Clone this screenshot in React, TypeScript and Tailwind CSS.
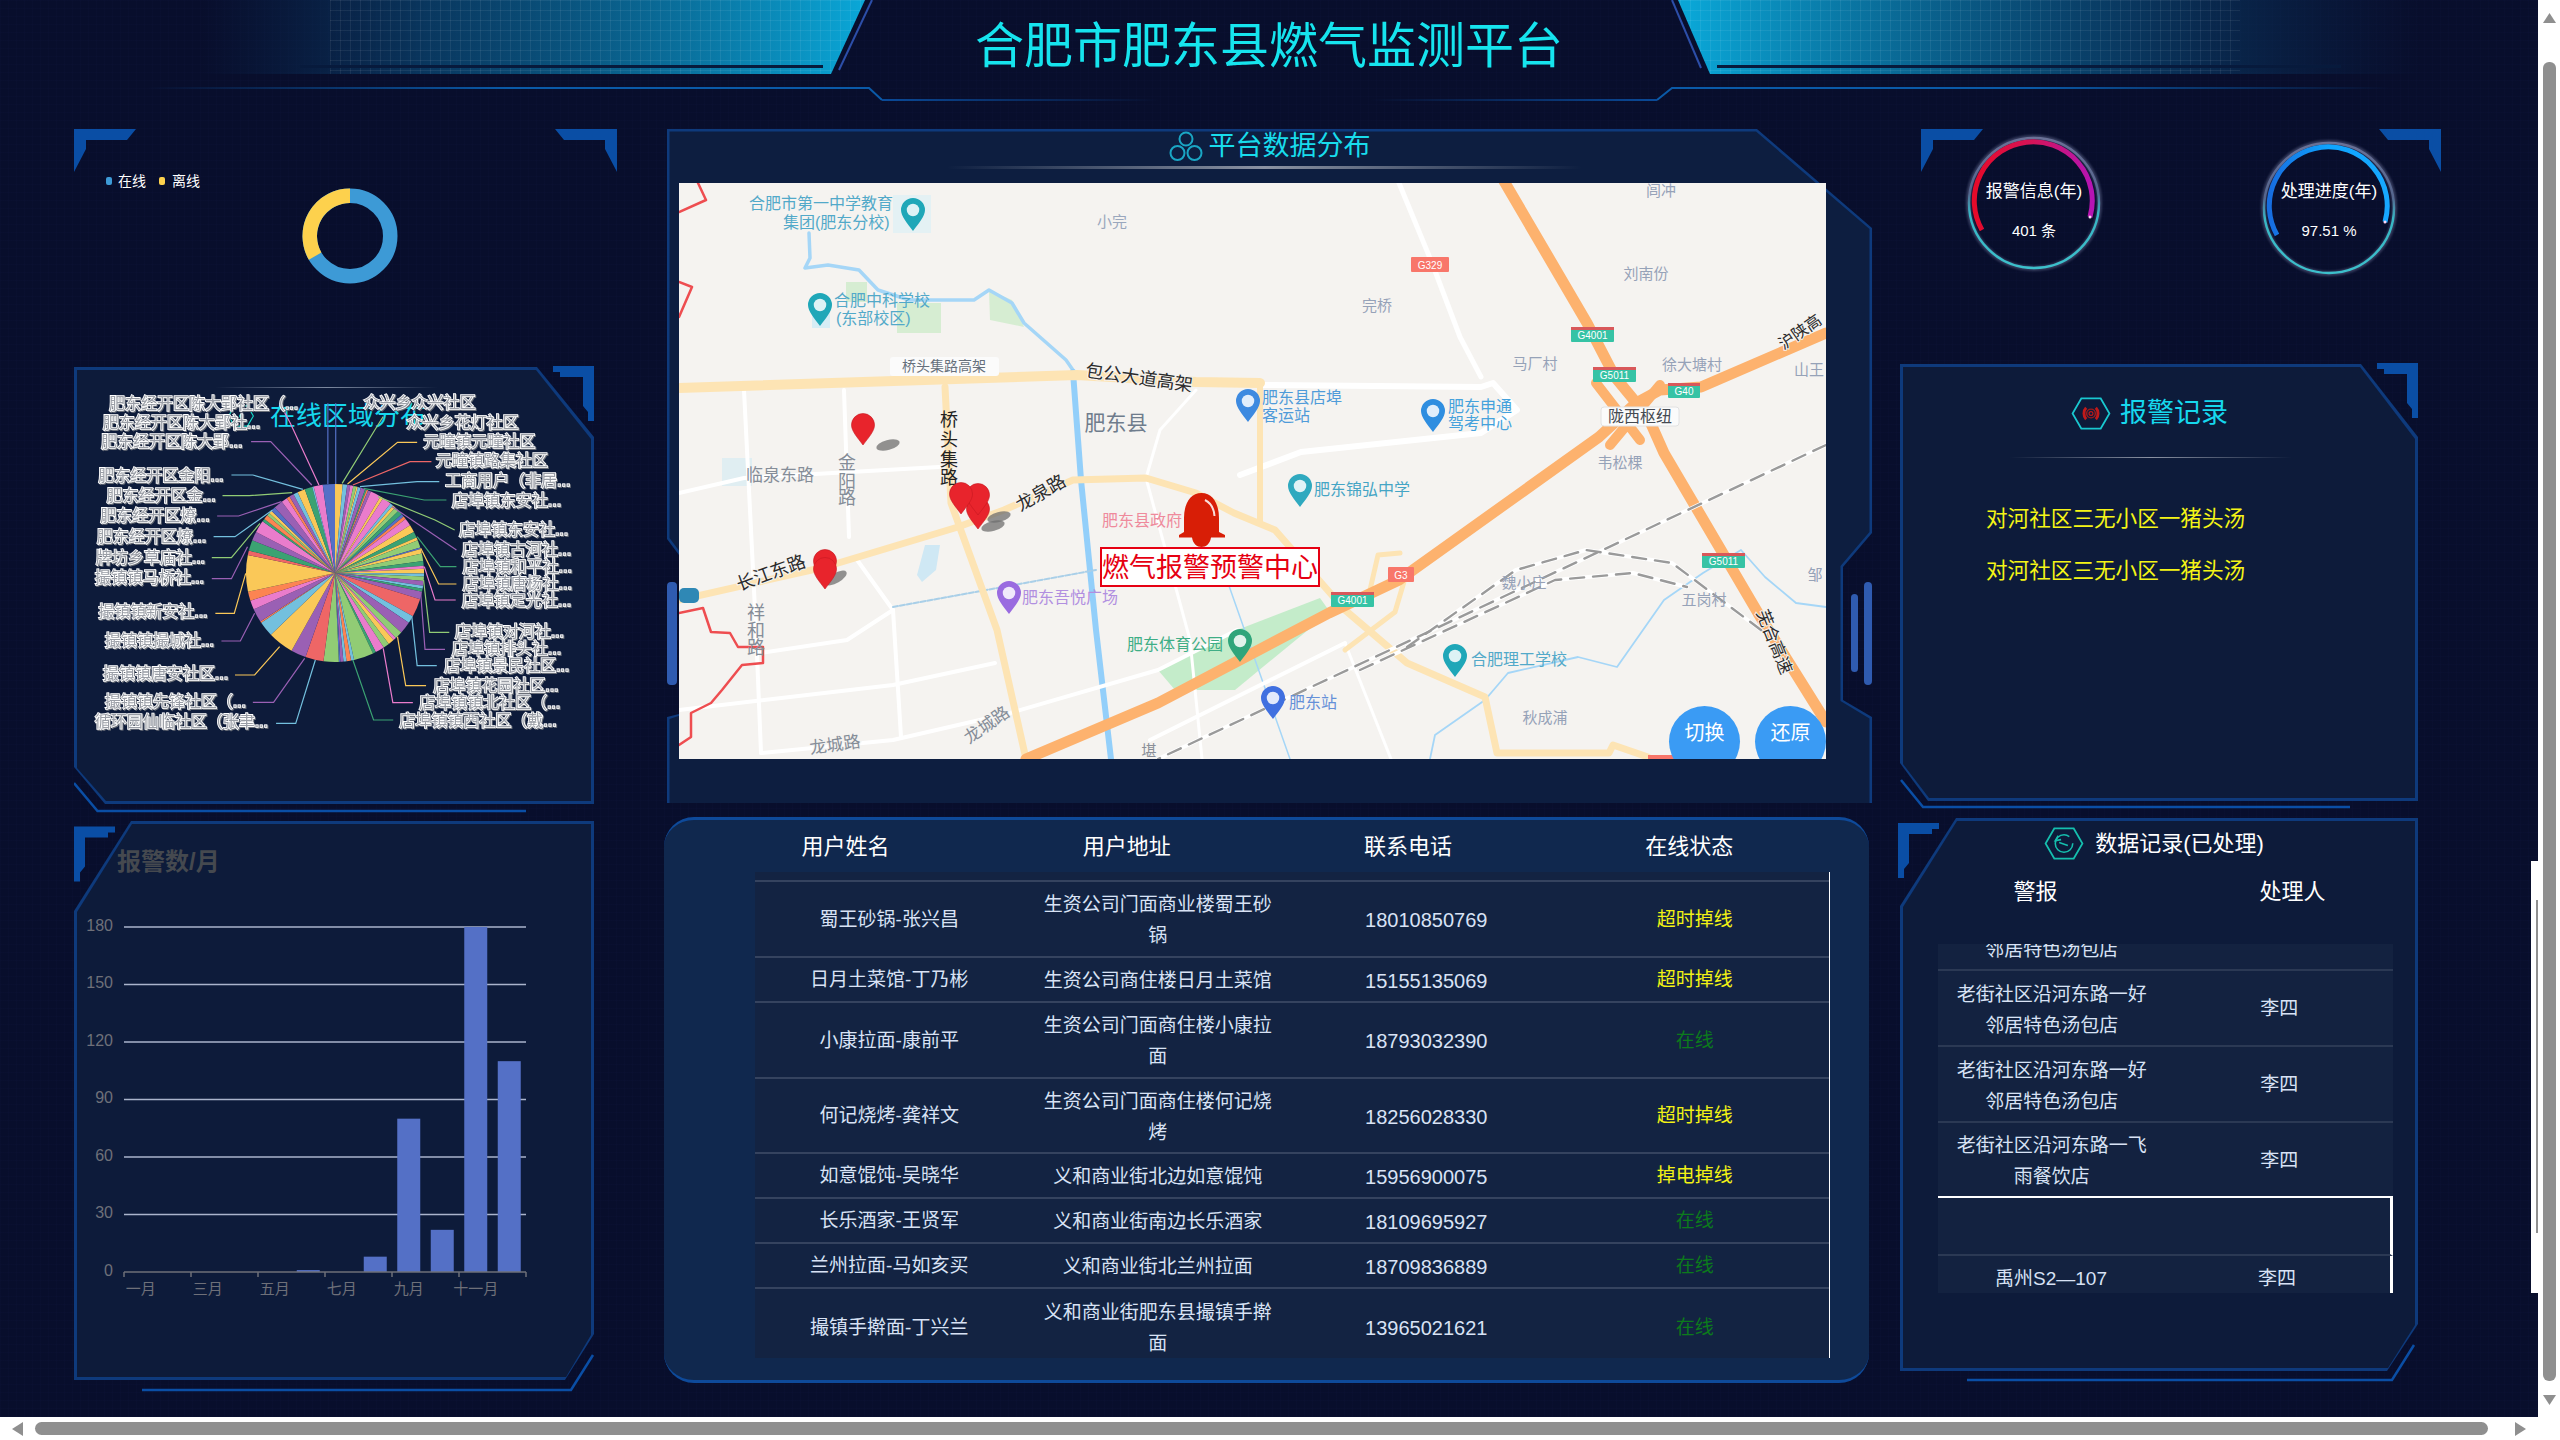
const PIE_COLORS: Record<string, string> = {
  b: '#5470c6', g: '#91cc75', y: '#fac858', r: '#ee6666', c: '#73c0de',
  d: '#3ba272', o: '#fc8452', p: '#9a60b4', k: '#ea7ccc',
}

const SLICES =
  'y5 c3 p2 k2 g2 y1 c2 p3 d1 o1 p2 k7 y2 k6 c2 y2 g3 d3 b2 o2 k5 y5 d4 y2 g5 b1 y3 g5 d3 k2 y3 c2 g3 p3 c2 d2 p5 r12 c5 p8 g5 k2 y4 g4 k6 d2 g13 c2 o3 c2 p2 b1 g10 r12 p10 y17 c10 o1 p9 k6 o6 y24 r3 d7 p6 k8 d2 o3 g2 y2 b3 p6 k4 o2 p3 c3 y5 d5 c1 k6 b8'
    .split(' ')
    .map((s) => ({ color: PIE_COLORS[s[0]], deg: Number(s.slice(1)) }))

// coordinates below were read off the pie crop, zx / zy turn them into page pixels
const zx = (v: number) => 60 + v / 2.8
const zy = (v: number) => 360 + v / 3

type PieLabel = { text: string; x: number; y: number; color: string; line: number[] }

const PIE_LABELS: PieLabel[] = [
  { text: '肥东经开区陈大郢社区（...', x: 137, y: 130, color: 'k', line: [725, 375, 645, 190, 625, 150] },
  { text: '肥东经开区陈大郢社...', x: 120, y: 188, color: 'b', line: [750, 372, 750, 130] },
  { text: '肥东经开区陈大郢...', x: 115, y: 245, color: 'p', line: [705, 375, 590, 245, 535, 245] },
  { text: '肥东经开区金阳...', x: 107, y: 345, color: 'c', line: [680, 388, 540, 345, 480, 345] },
  { text: '肥东经开区金...', x: 130, y: 407, color: 'g', line: [650, 398, 530, 407, 455, 407] },
  { text: '肥东经开区燎...', x: 113, y: 466, color: 'p', line: [620, 425, 500, 468, 440, 468] },
  { text: '肥东经开区燎...', x: 103, y: 530, color: 'c', line: [595, 450, 490, 530, 430, 530] },
  { text: '牌坊乡草庙社...', x: 100, y: 592, color: 'g', line: [560, 490, 480, 593, 425, 593] },
  { text: '撮镇镇马桥社...', x: 97, y: 652, color: 'p', line: [525, 560, 480, 656, 425, 656] },
  { text: '撮镇镇新安社...', x: 107, y: 755, color: 'y', line: [520, 640, 488, 760, 435, 760] },
  { text: '撮镇镇撮城社...', x: 125, y: 840, color: 'p', line: [545, 760, 505, 843, 452, 843] },
  { text: '撮镇镇唐安社区...', x: 120, y: 940, color: 'y', line: [615, 860, 545, 945, 490, 945] },
  { text: '撮镇镇先锋社区（...', x: 125, y: 1025, color: 'p', line: [685, 895, 598, 1027, 540, 1027] },
  { text: '循环园仙临社区（张聿...', x: 97, y: 1085, color: 'c', line: [715, 900, 660, 1090, 605, 1090] },
  { text: '众兴乡众兴社区', x: 850, y: 128, color: 'g', line: [790, 370, 890, 195, 905, 170] },
  { text: '众兴乡花灯社区', x: 970, y: 187, color: 'b', line: [772, 372, 772, 130] },
  { text: '元疃镇元疃社区', x: 1017, y: 245, color: 'y', line: [805, 372, 945, 247, 1000, 247] },
  { text: '元疃镇路集社区', x: 1052, y: 300, color: 'r', line: [820, 375, 980, 305, 1040, 305] },
  { text: '工商用户（非居...', x: 1078, y: 360, color: 'c', line: [840, 380, 1000, 365, 1062, 365] },
  { text: '店埠镇东安社...', x: 1097, y: 420, color: 'd', line: [850, 385, 1020, 420, 1082, 420] },
  { text: '店埠镇东安社...', x: 1117, y: 507, color: 'g', line: [890, 410, 1050, 480, 1105, 510] },
  { text: '店埠镇古河社...', x: 1125, y: 567, color: 'p', line: [930, 440, 1110, 570] },
  { text: '店埠镇和平社...', x: 1127, y: 620, color: 'd', line: [1000, 530, 1065, 620, 1110, 620] },
  { text: '店埠镇唐杨社...', x: 1127, y: 670, color: 'y', line: [1010, 565, 1060, 672, 1110, 672] },
  { text: '店埠镇定光社...', x: 1125, y: 720, color: 'k', line: [1020, 620, 1050, 720, 1108, 720] },
  { text: '店埠镇对河社...', x: 1105, y: 815, color: 'g', line: [1018, 660, 1035, 817, 1090, 817] },
  { text: '店埠镇排头社...', x: 1097, y: 865, color: 'p', line: [1010, 700, 1022, 868, 1078, 868] },
  { text: '店埠镇景民社区...', x: 1075, y: 915, color: 'c', line: [985, 770, 1000, 917, 1055, 917] },
  { text: '店埠镇花园社区...', x: 1045, y: 975, color: 'y', line: [945, 830, 968, 977, 1025, 977] },
  { text: '店埠镇镇北社区（...', x: 1005, y: 1027, color: 'k', line: [905, 865, 932, 1028, 988, 1028] },
  { text: '店埠镇镇西社区（戴...', x: 950, y: 1080, color: 'd', line: [820, 900, 878, 1080, 933, 1080] },
]

const TABLE_ROWS = [
  { name: '蜀王砂锅-张兴昌', addr: '生资公司门面商业楼蜀王砂锅', phone: '18010850769', status: '超时掉线', tone: 'text-[#f2f215]', h: 'h-[76px]' },
  { name: '日月土菜馆-丁乃彬', addr: '生资公司商住楼日月土菜馆', phone: '15155135069', status: '超时掉线', tone: 'text-[#f2f215]', h: 'h-[45px]' },
  { name: '小康拉面-康前平', addr: '生资公司门面商住楼小康拉面', phone: '18793032390', status: '在线', tone: 'text-[#0c7a1c]', h: 'h-[76px]' },
  { name: '何记烧烤-龚祥文', addr: '生资公司门面商住楼何记烧烤', phone: '18256028330', status: '超时掉线', tone: 'text-[#f2f215]', h: 'h-[75px]' },
  { name: '如意馄饨-吴晓华', addr: '义和商业街北边如意馄饨', phone: '15956900075', status: '掉电掉线', tone: 'text-[#f2f215]', h: 'h-[45px]' },
  { name: '长乐酒家-王贤军', addr: '义和商业街南边长乐酒家', phone: '18109695927', status: '在线', tone: 'text-[#0c7a1c]', h: 'h-[45px]' },
  { name: '兰州拉面-马如亥买', addr: '义和商业街北兰州拉面', phone: '18709836889', status: '在线', tone: 'text-[#0c7a1c]', h: 'h-[45px]' },
  { name: '撮镇手擀面-丁兴兰', addr: '义和商业街肥东县撮镇手擀面', phone: '13965021621', status: '在线', tone: 'text-[#0c7a1c]', h: 'h-[76px]' },
]

const BARS = [
  { band: 5, value: 1 },
  { band: 7, value: 8 },
  { band: 8, value: 80 },
  { band: 9, value: 22 },
  { band: 10, value: 180 },
  { band: 11, value: 110 },
]

function TopBracket({ flip }: { flip?: boolean }) {
  return (
    <svg
      viewBox="0 0 62 43"
      className={flip ? 'absolute top-0 right-0 w-[62px] h-[43px] -scale-x-100' : 'absolute top-0 left-0 w-[62px] h-[43px]'}
    >
      <polygon points="0,0 62,0 53,11 12,11 12,20 0,43" fill="#0a4ea5" />
    </svg>
  )
}

function StepBracket({ className }: { className: string }) {
  return (
    <svg viewBox="0 0 41 55" className={className}>
      <polygon points="0,0 41,0 41,55 35,55 35,46 30,40 30,11 7,11 7,6 0,6" fill="#0a4ea5" />
    </svg>
  )
}

function Hex({ children, stroke, className }: { children: React.ReactNode; stroke: string; className: string }) {
  return (
    <svg viewBox="0 0 40 34" className={className}>
      <polygon points="10,1.5 30,1.5 39,17 30,32.5 10,32.5 1,17" fill="none" stroke={stroke} strokeWidth="1.8" />
      {children}
    </svg>
  )
}

function Gauge({ id, from, mid, to, title, value, textPad }: { id: string; from: string; mid: string; to: string; title: string; value: string; textPad: string }) {
  return (
    <div className="relative w-[140px] h-[140px] shrink-0">
      <svg viewBox="-70 -70 140 140" className="absolute inset-0 w-full h-full overflow-visible">
        <defs>
          <linearGradient id={`${id}-ring`} x1="0" y1="0" x2="0" y2="1">
            <stop offset="0" stopColor="#6a7196" />
            <stop offset="0.42" stopColor="#55668e" />
            <stop offset="0.58" stopColor="#38b6c4" />
            <stop offset="1" stopColor="#3cc0cc" />
          </linearGradient>
          <linearGradient id={`${id}-arc`} gradientUnits="userSpaceOnUse" x1="-59" y1="0" x2="59" y2="0">
            <stop offset="0" stopColor={from} />
            <stop offset="0.5" stopColor={mid} />
            <stop offset="1" stopColor={to} />
          </linearGradient>
        </defs>
        <circle r="65.5" fill="none" stroke="#5c6488" strokeOpacity="0.55" strokeWidth="5" className="blur-[1px]" />
        <circle r="65" fill="none" stroke={`url(#${id}-ring)`} strokeWidth="2.4" />
        <path d="M-52 27 A59 59 0 1 1 56 14" fill="none" stroke={`url(#${id}-arc)`} strokeWidth="5" />
        <circle cx="56" cy="14" r="1.5" fill="#ffd6f5" />
      </svg>
      <div className={`absolute inset-0 flex flex-col items-center text-white ${textPad}`}>
        <span className="h-[24px] leading-[24px] text-[17px] whitespace-nowrap">{title}</span>
        <span className="mt-[15px] h-[24px] leading-[24px] text-[15px] whitespace-nowrap">{value}</span>
      </div>
    </div>
  )
}

function Header() {
  return (
    <header className="relative h-[129px] flex justify-center">
      <svg viewBox="0 0 2538 129" className="absolute top-0 left-0 w-[2538px] h-[129px]">
        <defs>
          <linearGradient id="hl" gradientUnits="userSpaceOnUse" x1="200" y1="0" x2="860" y2="0">
            <stop offset="0" stopColor="#0a3a6a" stopOpacity="0" />
            <stop offset="0.35" stopColor="#0a5a8a" stopOpacity="0.55" />
            <stop offset="1" stopColor="#0aa6d6" />
          </linearGradient>
          <linearGradient id="hr" gradientUnits="userSpaceOnUse" x1="2420" y1="0" x2="1690" y2="0">
            <stop offset="0" stopColor="#0a3a6a" stopOpacity="0" />
            <stop offset="0.4" stopColor="#0a5a8a" stopOpacity="0.55" />
            <stop offset="1" stopColor="#0aa6d6" />
          </linearGradient>
          <linearGradient id="ll" gradientUnits="userSpaceOnUse" x1="147" y1="0" x2="869" y2="0">
            <stop offset="0" stopColor="#0a5aa8" stopOpacity="0" />
            <stop offset="0.5" stopColor="#0a5aa8" />
            <stop offset="1" stopColor="#0a5aa8" />
          </linearGradient>
          <linearGradient id="lr" gradientUnits="userSpaceOnUse" x1="2390" y1="0" x2="1672" y2="0">
            <stop offset="0" stopColor="#0a5aa8" stopOpacity="0" />
            <stop offset="0.5" stopColor="#0a5aa8" />
            <stop offset="1" stopColor="#0a5aa8" />
          </linearGradient>
          <linearGradient id="ll2" gradientUnits="userSpaceOnUse" x1="882" y1="0" x2="1159" y2="0">
            <stop offset="0" stopColor="#0a4a98" />
            <stop offset="1" stopColor="#0a4a98" stopOpacity="0" />
          </linearGradient>
          <linearGradient id="lr2" gradientUnits="userSpaceOnUse" x1="1657" y1="0" x2="1370" y2="0">
            <stop offset="0" stopColor="#0a4a98" />
            <stop offset="1" stopColor="#0a4a98" stopOpacity="0" />
          </linearGradient>
          <pattern id="grid" width="10" height="10" patternUnits="userSpaceOnUse">
            <path d="M10 0H0V10" fill="none" stroke="#ffffff" strokeOpacity="0.13" strokeWidth="1" />
          </pattern>
        </defs>
        <polygon points="200,0 865,0 831,74 200,74" fill="url(#hl)" />
        <polygon points="330,0 865,0 831,74 330,74" fill="url(#grid)" />
        <polygon points="1678,0 2420,0 2420,74 1710,74" fill="url(#hr)" />
        <polygon points="1678,0 2240,0 2240,74 1710,74" fill="url(#grid)" />
        <rect x="300" y="65" width="523" height="3" fill="#071a3c" />
        <rect x="1717" y="65" width="624" height="3" fill="#071a3c" />
        <line x1="872" y1="0" x2="839" y2="70" stroke="#2c4ea8" strokeWidth="2" />
        <line x1="1672" y1="0" x2="1701" y2="68" stroke="#2c4ea8" strokeWidth="2" />
        <path d="M147 88H869L882 100" fill="none" stroke="url(#ll)" strokeWidth="2" />
        <path d="M882 100H1159" fill="none" stroke="url(#ll2)" strokeWidth="2" />
        <path d="M2390 88H1672L1657 100" fill="none" stroke="url(#lr)" strokeWidth="2" />
        <path d="M1657 100H1370" fill="none" stroke="url(#lr2)" strokeWidth="2" />
      </svg>
      <h1 className="relative mt-[14px] h-[64px] leading-[64px] text-[49px] font-normal text-[#16e4ee]">
        合肥市肥东县燃气监测平台
      </h1>
    </header>
  )
}

function DonutBlock() {
  return (
    <div className="relative h-[238px] flex justify-center pt-[59px] pl-[9px]">
      <TopBracket />
      <TopBracket flip />
      <div className="absolute top-[42px] left-[32px] flex items-center h-[20px] text-[14px] text-white">
        <span className="w-[6px] h-[8px] rounded-[2px] bg-[#3d9ad6]" />
        <span className="ml-[6px]">在线</span>
        <span className="ml-[13px] w-[6px] h-[8px] rounded-[2px] bg-[#fdd14d]" />
        <span className="ml-[7px]">离线</span>
      </div>
      <svg viewBox="-48 -48 96 96" className="w-[96px] h-[96px]">
        <circle r="40.25" fill="none" stroke="#3d9ad6" strokeWidth="14.5" />
        <path d="M0 -40.25A40.25 40.25 0 0 0 -34.86 20.12" fill="none" stroke="#fdd14d" strokeWidth="14.5" />
      </svg>
    </div>
  )
}

function PiePanel() {
  const cx = 335
  const cy = 573
  const r = 89
  const total = SLICES.reduce((s, x) => s + x.deg, 0)
  let acc = 0
  const wedges = SLICES.map((s) => {
    const a0 = (acc / total) * Math.PI * 2
    acc += s.deg
    const a1 = (acc / total) * Math.PI * 2
    const big = a1 - a0 > Math.PI ? 1 : 0
    return {
      color: s.color,
      d: `M${cx} ${cy}L${cx + r * Math.sin(a0)} ${cy - r * Math.cos(a0)}A${r} ${r} 0 ${big} 1 ${cx + r * Math.sin(a1)} ${cy - r * Math.cos(a1)}Z`,
    }
  })
  return (
    <section className="relative w-[520px] h-[437px]">
      <div className="absolute inset-0 bg-[#0e3a7c] [clip-path:polygon(0_0,463px_0,100%_70px,100%_100%,31px_100%,0_400px)]" />
      <div className="absolute inset-[3px] bg-[#0d1b3a] [clip-path:polygon(0_0,459px_0,100%_69px,100%_100%,29px_100%,0_398px)]" />
      <StepBracket className="absolute -top-[1px] right-0 w-[41px] h-[55px]" />
      <div className="relative flex justify-center pt-[20px] pr-[14px]">
        <div className="w-[223px] h-px bg-[linear-gradient(90deg,transparent,#7d8aa0,transparent)] absolute top-[20px] left-[141px]" />
        <div className="flex items-center gap-[16px] mt-[11px] h-[36px] text-[26px] text-[#16d8ee] whitespace-nowrap">
          <Hex stroke="#16d8c8" className="w-[26px] h-[28px] shrink-0">
            <circle cx="20" cy="17" r="3" fill="#16d8c8" />
          </Hex>
          <span>在线区域分布</span>
        </div>
      </div>
      <svg viewBox="74 367 520 437" className="absolute inset-0 w-full h-full overflow-visible">
        {wedges.map((w, i) => (
          <path key={i} d={w.d} fill={w.color} />
        ))}
        {PIE_LABELS.map((l, i) => (
          <polyline
            key={i}
            fill="none"
            stroke={PIE_COLORS[l.color]}
            strokeWidth="1.2"
            points={l.line.map((v, k) => (k % 2 ? zy(v) : zx(v))).join(' ')}
          />
        ))}
        <g className="[filter:drop-shadow(1px_1px_0_#6a6f78)]">
          {PIE_LABELS.map((l, i) => (
            <text
              key={i}
              x={zx(l.x)}
              y={zy(l.y)}
              dominantBaseline="central"
              fontSize="16"
              fill="#9a9ea6"
              stroke="#ffffff"
              strokeWidth="1.7"
              paintOrder="stroke"
            >
              {l.text}
            </text>
          ))}
        </g>
      </svg>
      <svg viewBox="0 0 520 450" className="absolute top-0 left-0 w-[520px] h-[450px] pointer-events-none">
        <polyline points="0,416 23.5,444 452,444" fill="none" stroke="#0a4ea5" strokeWidth="2.5" />
      </svg>
    </section>
  )
}

function BarPanel() {
  const yOf = (v: number) => 1272 - (v * 345) / 180
  return (
    <section className="relative w-[520px] h-[559px] mt-[17px]">
      <div className="absolute inset-0 bg-[#0e3a7c] [clip-path:polygon(57px_0,100%_0,100%_513px,491px_100%,0_100%,0_90px)]" />
      <div className="absolute inset-[3px] bg-[#0d1b3a] [clip-path:polygon(55px_0,100%_0,100%_511px,489px_100%,0_100%,0_88px)]" />
      <StepBracket className="absolute -top-[1px] left-0 w-[41px] h-[68px] -scale-x-100" />
      <svg viewBox="74 821 520 580" className="absolute top-0 left-0 w-[520px] h-[580px] overflow-visible">
        <polyline points="142,1390 571,1390 593,1355" fill="none" stroke="#0a4ea5" strokeWidth="2.5" />
        {[0, 30, 60, 90, 120, 150, 180].map((v) => (
          <g key={v}>
            {v > 0 && <line x1="124" x2="526" y1={yOf(v)} y2={yOf(v)} stroke="#aab4cc" strokeWidth="1.4" />}
            <text x="113" y={yOf(v) - 2} textAnchor="end" dominantBaseline="central" fontSize="16" fill="#6e7079">
              {v}
            </text>
          </g>
        ))}
        {BARS.map((b) => (
          <rect key={b.band} x={124 + b.band * 33.5 + 5.25} y={yOf(b.value)} width="23" height={1272 - yOf(b.value)} fill="#5470c6" />
        ))}
        <line x1="124" x2="526" y1="1272" y2="1272" stroke="#6e7079" strokeWidth="1.5" />
        {[0, 2, 4, 6, 8, 10, 12].map((b) => (
          <line key={b} x1={124 + b * 33.5} x2={124 + b * 33.5} y1="1272" y2="1277" stroke="#6e7079" strokeWidth="1.5" />
        ))}
        {['一月', '三月', '五月', '七月', '九月', '十一月'].map((m, i) => (
          <text key={m} x={124 + (i * 2 + 0.5) * 33.5} y="1288" textAnchor="middle" dominantBaseline="central" fontSize="15" fill="#6e7079">
            {m}
          </text>
        ))}
      </svg>
      <h3 className="relative pt-[25px] pl-[43px] h-[50px] leading-[32px] text-[24px] font-bold text-[#45494f]">报警数/月</h3>
    </section>
  )
}

function Pin({ x, y, r, color }: { x: number; y: number; r: number; color: string }) {
  return (
    <g>
      <path
        d={`M${x} ${y + r * 1.75}C${x - r * 0.5} ${y + r * 1.1} ${x - r} ${y + r * 0.5} ${x - r} ${y}A${r} ${r} 0 1 1 ${x + r} ${y}C${x + r} ${y + r * 0.5} ${x + r * 0.5} ${y + r * 1.1} ${x} ${y + r * 1.75}Z`}
        fill={color}
      />
      <circle cx={x} cy={y} r={r * 0.52} fill="#ffffff" fillOpacity="0.85" />
    </g>
  )
}

const POI_TEXT: [string, number, number, string, number, ('middle' | 'start')?][] = [
  ['合肥市第一中学教育', 749, 203, '#52a9c9', 16, 'start'],
  ['集团(肥东分校)', 783, 222, '#52a9c9', 16, 'start'],
  ['合肥中科学校', 834, 300, '#52a9c9', 16, 'start'],
  ['(东部校区)', 836, 318, '#52a9c9', 16, 'start'],
  ['小完', 1112, 221, '#9aa7bd', 15],
  ['肥东县', 1116, 422, '#6f7c8c', 21],
  ['临泉东路', 780, 475, '#858d98', 17],
  ['肥东县政府', 1142, 520, '#ef8a9c', 16],
  ['肥东吾悦广场', 1070, 597, '#b18fe0', 16],
  ['肥东体育公园', 1175, 644, '#3fae86', 16],
  ['肥东站', 1313, 702, '#6590d8', 16],
  ['合肥理工学校', 1519, 659, '#52a9c9', 16],
  ['秋成浦', 1545, 717, '#96a2b8', 15],
  ['魏小庄', 1524, 582, '#96a2b8', 15],
  ['五岗村', 1704, 599, '#96a2b8', 15],
  ['韦松棵', 1620, 462, '#96a2b8', 15],
  ['马厂村', 1535, 363, '#96a2b8', 15],
  ['徐大塘村', 1692, 364, '#96a2b8', 15],
  ['刘南份', 1646, 273, '#96a2b8', 15],
  ['完桥', 1377, 305, '#96a2b8', 15],
  ['闾冲', 1661, 190, '#96a2b8', 15],
  ['山王', 1809, 369, '#96a2b8', 15],
  ['邹', 1815, 574, '#96a2b8', 15],
  ['肥东县店埠', 1302, 397, '#4f9bd9', 16],
  ['客运站', 1286, 415, '#4f9bd9', 16],
  ['肥东申通', 1480, 406, '#45a2dc', 16],
  ['驾考中心', 1480, 423, '#45a2dc', 16],
  ['肥东锦弘中学', 1362, 489, '#45a5c5', 16],
  ['堪', 1149, 750, '#8a8f98', 15],
]

const ROT_TEXT: [string, number, number, number, string, number][] = [
  ['包公大道高架', 1139, 378, 8, '#2b2b2b', 18],
  ['龙泉路', 1041, 493, -30, '#2b2b2b', 18],
  ['长江东路', 771, 573, -20, '#2b2b2b', 18],
  ['龙城路', 987, 725, -35, '#858d98', 17],
  ['龙城路', 835, 745, -8, '#858d98', 17],
  ['沪陕高', 1800, 332, -35, '#2b2b2b', 16],
  ['芜合高速', 1774, 642, 68, '#2b2b2b', 17],
]

const VERT_TEXT: [string, number, number, string][] = [
  ['桥', 949, 420, '#222222'],
  ['头', 949, 440, '#222222'],
  ['集', 949, 460, '#222222'],
  ['路', 949, 478, '#222222'],
  ['金', 847, 463, '#858d98'],
  ['阳', 847, 482, '#858d98'],
  ['路', 847, 498, '#858d98'],
  ['祥', 756, 613, '#858d98'],
  ['和', 756, 631, '#858d98'],
  ['路', 756, 648, '#858d98'],
]

const SHIELDS: [string, number, number, number, boolean][] = [
  ['G329', 1411, 257, 38, true],
  ['G4001', 1571, 327, 43, false],
  ['G5011', 1593, 367, 43, false],
  ['G40', 1668, 383, 32, false],
  ['G3', 1388, 567, 26, true],
  ['G4001', 1331, 592, 43, false],
  ['G5011', 1702, 553, 43, false],
]

function MapPanel() {
  return (
    <section className="relative ml-[3px] w-[1205px] h-[674px]">
      <div className="absolute inset-0 bg-[#0e3a7c] [clip-path:polygon(0_0,1090px_0,1205px_99px,1205px_404px,1176px_438px,1176px_571px,1205px_588px,1205px_674px,0_674px,0_588px,12px_585px,12px_426px,0_410px)]" />
      <div className="absolute inset-0 bg-[#0d1e40] [clip-path:polygon(2.5px_2.5px,1089px_2.5px,1202.5px_100px,1202.5px_403px,1173.5px_437px,1173.5px_572px,1202.5px_589.5px,1202.5px_674px,2.5px_674px,2.5px_590px,14.5px_586px,14.5px_425px,2.5px_409px)]" />
      <div className="absolute left-0 top-[453px] w-[10px] h-[103px] rounded-[4px] bg-[#2f5bb0]" />
      <div className="absolute right-0 top-[453px] w-[8px] h-[103px] rounded-[4px] bg-[#2f5bb0]" />
      <div className="absolute right-[14px] top-[465px] w-[7px] h-[78px] rounded-[4px] bg-[#2f5bb0]" />
      <div className="relative h-[54px] flex justify-center pt-[1px]">
        <div className="flex items-center gap-[6px] h-[32px] text-[27px] text-[#18dcec]">
          <svg viewBox="0 0 34 32" className="w-[34px] h-[32px]">
            <g fill="none" stroke="#1aa6c4" strokeWidth="2">
              <circle cx="17" cy="9" r="6.5" />
              <circle cx="8.5" cy="23" r="7" />
              <circle cx="25.5" cy="23" r="7" />
            </g>
          </svg>
          <span>平台数据分布</span>
        </div>
        <div className="absolute top-[37px] left-[280px] w-[635px] h-[3px] bg-[linear-gradient(90deg,transparent,#8b93a3,transparent)]" />
      </div>
      <div className="relative ml-[12px] w-[1147px] h-[576px] overflow-hidden bg-[#f5f3f0]">
        <svg viewBox="679 183 1147 576" className="absolute inset-0 w-full h-full">
          <g fill="#d6edd2">
            <rect x="846" y="282" width="21" height="20" />
            <rect x="897" y="303" width="44" height="30" />
            <polygon points="989,290 1012,300 1024,327 990,320" />
          </g>
          <polygon points="1158,670 1237,630 1320,598 1330,612 1235,690 1175,690" fill="#c4ecca" />
          <g fill="none" stroke="#c8e6f6" strokeWidth="1">
            <rect x="812" y="298" width="18" height="30" fill="#d6edf5" stroke="none" />
            <rect x="893" y="195" width="38" height="38" fill="#e4f1f4" stroke="none" />
            <polygon points="917,575 925,545 940,545 936,570 922,582" fill="#cfe8f4" stroke="none" />
            <rect x="722" y="458" width="30" height="28" fill="#e0eef2" stroke="none" />
          </g>
          <g fill="none" strokeLinejoin="round" strokeLinecap="round">
            <path d="M809 233L810 258L805 268L828 265L859 270L878 290L909 300L947 300L974 300L989 290L1012 303L1024 323L1066 360L1075 373" stroke="#a5d6f7" strokeWidth="3.5" />
            <path d="M1073 372L1081 480L1096 630L1111 759" stroke="#93cffa" strokeWidth="6" />
            <path d="M1228 583L1290 759" stroke="#a5d6f7" strokeWidth="1.5" />
            <path d="M1430 759L1435 735L1485 700L1508 673L1578 657L1617 667L1664 600L1703 573L1741 550L1765 577L1796 603L1826 607" stroke="#a5d6f7" strokeWidth="1.8" />
            <g stroke="#ffffff">
              <path d="M744 390L756 630L761 753" strokeWidth="4" />
              <path d="M844 390L849 537" strokeWidth="4" />
              <path d="M679 493L744 478L939 467" strokeWidth="4" />
              <path d="M761 653L847 640L893 610L855 557" strokeWidth="4" />
              <path d="M893 610L901 737" strokeWidth="4" />
              <path d="M679 710L893 685L995 663" strokeWidth="4" />
              <path d="M761 753L893 740L1010 713L1158 670L1237 630" strokeWidth="4" />
              <path d="M1150 740L1345 643" strokeWidth="4" />
              <path d="M1345 643L1391 759" strokeWidth="3" />
              <path d="M1260 385L1481 387L1493 383L1517 410L1481 433L1301 452L1240 475" strokeWidth="6" />
              <path d="M1481 377L1460 337L1432 263L1399 183" strokeWidth="5" />
              <path d="M1196 390L1160 430L1146 478L1190 640L1202 759" strokeWidth="3" />
            </g>
            <path d="M893 607L1096 570" stroke="#a9cfe8" strokeWidth="2" strokeDasharray="5 2" />
            <g stroke="#fde4b4">
              <path d="M679 388L1077 375L1196 382L1260 383" strokeWidth="10" />
              <path d="M1260 383L1260 523" strokeWidth="6" />
              <path d="M945 387L951 503L997 630L1026 759" strokeWidth="7" />
              <path d="M679 600L825 567L958 527L1004 510L1073 480L1146 478L1196 493L1234 513L1275 530L1345 610L1407 663L1485 697L1497 753L1609 753L1613 745L1648 757" strokeWidth="7" />
              <path d="M1370 590L1378 555L1400 553" strokeWidth="5" />
              <path d="M1406 575L1395 612L1345 650" strokeWidth="5" />
            </g>
            <g stroke="#fdb26e" strokeWidth="11">
              <path d="M1026 759L1158 703L1329 613L1399 580L1599 437L1636 403L1660 390L1701 387L1826 333" />
              <path d="M1501 176L1587 323L1615 377L1648 417L1664 453L1758 613L1826 722" />
            </g>
            <path d="M1596 383L1640 440M1660 385L1610 445" stroke="#fdb26e" strokeWidth="10" />
            <g stroke="#ffffff" strokeWidth="4">
              <path d="M1826 445L1158 759" />
              <path d="M1407 647L1516 570L1586 550L1672 563L1765 633" />
              <path d="M1360 670L1555 580L1633 573L1687 587" />
            </g>
            <g stroke="#9a9a9a" strokeWidth="2.4" strokeDasharray="14 9">
              <path d="M1826 445L1158 759" />
              <path d="M1407 647L1516 570L1586 550L1672 563L1765 633" />
              <path d="M1360 670L1555 580L1633 573L1687 587" />
            </g>
            <g stroke="#ee4d50" strokeWidth="2.5">
              <path d="M698 183L706 200L679 212" />
              <path d="M679 282L692 287L679 317" />
              <path d="M679 613L703 608L711 632L730 633L738 647L763 647L763 663L742 665L722 690L711 703L691 713L691 737L679 745" />
            </g>
          </g>
          <rect x="679" y="588" width="20" height="15" rx="5" fill="#2f88b5" />
          <rect x="890" y="357" width="109" height="19" rx="3" fill="#fbfbfb" />
          <rect x="1601" y="407" width="78" height="19" rx="3" fill="#fbfbfb" stroke="#e2e2e2" />
          <rect x="1477" y="176" width="43" height="7" fill="#36c3a5" />
          <rect x="1648" y="755" width="38" height="4" fill="#f8766a" />
          {SHIELDS.map(([t, x, y, w, red]) => (
            <g key={`${t}-${x}`}>
              <rect x={x} y={y} width={w} height="15" rx="1" fill={red ? '#f8766a' : '#36c3a5'} />
              {!red && <rect x={x} y={y} width={w} height="3" fill="#d8585a" />}
              <text x={x + w / 2} y={y + 8.5} textAnchor="middle" dominantBaseline="central" fontSize="10" fill="#ffffff">
                {t}
              </text>
            </g>
          ))}
          <Pin x={913} y={210} r={12} color="#1fa7b8" />
          <Pin x={820} y={305} r={12} color="#1fa7b8" />
          <Pin x={1300} y={486} r={12} color="#2fa9bf" />
          <Pin x={1455} y={656} r={12} color="#1fa7b8" />
          <Pin x={1248} y={401} r={12} color="#3d8ae0" />
          <Pin x={1433} y={411} r={12} color="#2f8ee0" />
          <Pin x={1009} y={593} r={12} color="#9a6be0" />
          <Pin x={1240} y={641} r={12} color="#2fa57b" />
          <Pin x={1273} y={698} r={12} color="#4070e0" />
          {POI_TEXT.map(([t, x, y, fill, size, anchor]) => (
            <text key={`${t}-${x}`} x={x} y={y} textAnchor={anchor ?? 'middle'} dominantBaseline="central" fontSize={size} fill={fill}>
              {t}
            </text>
          ))}
          <text x="944" y="366" textAnchor="middle" dominantBaseline="central" fontSize="14" fill="#66707c">桥头集路高架</text>
          <text x="1640" y="416" textAnchor="middle" dominantBaseline="central" fontSize="16" fill="#454a52">陇西枢纽</text>
          {ROT_TEXT.map(([t, x, y, deg, fill, size]) => (
            <text key={`${t}-${x}`} x={x} y={y} textAnchor="middle" dominantBaseline="central" fontSize={size} fill={fill} transform={`rotate(${deg} ${x} ${y})`} stroke="#f5f3f0" strokeWidth="2" paintOrder="stroke">
              {t}
            </text>
          ))}
          {VERT_TEXT.map(([t, x, y, fill]) => (
            <text key={`${t}-${x}-${y}`} x={x} y={y} textAnchor="middle" dominantBaseline="central" fontSize="18" fill={fill}>
              {t}
            </text>
          ))}
          <g fill="#6f6f6f" fillOpacity="0.75">
            <ellipse cx="888" cy="445" rx="12" ry="5" transform="rotate(-15 888 445)" />
            <ellipse cx="999" cy="517" rx="12" ry="5" transform="rotate(-15 999 517)" />
            <ellipse cx="993" cy="526" rx="12" ry="5" transform="rotate(-15 993 526)" />
            <ellipse cx="836" cy="578" rx="12" ry="5" transform="rotate(-30 836 578)" />
          </g>
          {[
            [978, 509],
            [978, 495],
            [961, 494],
            [863, 425],
            [825, 561],
            [825, 569],
          ].map(([x, y], i) => (
            <path
              key={i}
              d={`M${x} ${y + 20}C${x - 6} ${y + 12} ${x - 11.5} ${y + 6} ${x - 11.5} ${y}A11.5 11.5 0 1 1 ${x + 11.5} ${y}C${x + 11.5} ${y + 6} ${x + 6} ${y + 12} ${x} ${y + 20}Z`}
              fill="#e8242c"
              stroke="#c61a22"
              strokeWidth="0.6"
            />
          ))}
          <path
            d="M1201.5 493C1190 493 1184 504 1184 518V532L1179 535V537.5H1192C1193 544 1197 547 1201.5 547C1206 547 1210 544 1211 537.5H1225V535L1219 532V518C1219 504 1213 493 1201.5 493Z"
            fill="#d81e06"
          />
          <path d="M1205 500C1211 503 1214 509 1214.5 516" fill="none" stroke="#ffffff" strokeWidth="2" strokeOpacity="0.85" />
        </svg>
        <div className="absolute left-[421px] top-[364px] w-[220px] h-[40px] bg-white border-2 border-[#e60012] text-[#e60012] text-[27px] leading-[38px] text-center whitespace-nowrap">
          燃气报警预警中心
        </div>
        <div className="absolute right-0 top-[523px] flex gap-[15px]">
          <button className="w-[71px] h-[71px] rounded-full bg-[#3a9bf4] text-white text-[20px] pb-[18px]">切换</button>
          <button className="w-[71px] h-[71px] rounded-full bg-[#3a9bf4] text-white text-[20px] pb-[18px]">还原</button>
        </div>
      </div>
    </section>
  )
}

function UserTable() {
  return (
    <section className="w-[1205px] h-[566px] mt-[14px] rounded-[30px] border-y-[3px] border-[#0e4a9a] bg-[#10284e] overflow-hidden">
      <div className="ml-[41px] w-[1125px] h-[52px] grid grid-cols-4 items-center text-center text-[22px] text-white">
        <span>用户姓名</span>
        <span>用户地址</span>
        <span>联系电话</span>
        <span>在线状态</span>
      </div>
      <div className="ml-[91px] w-[1075px] h-[486px] overflow-hidden bg-[#132342] border-r border-white text-[19px] text-[#d8e2f5]">
        <div className="h-[10px] border-b-2 border-[#35435f]" />
        {TABLE_ROWS.map((r) => (
          <div key={r.name} className={`${r.h} shrink-0 pt-[2px] grid grid-cols-4 items-center text-center border-b-2 border-[#35435f] last:border-b-0`}>
            <span>{r.name}</span>
            <span className="mx-auto max-w-[232px] leading-[31px]">{r.addr}</span>
            <span className="text-[20px]">{r.phone}</span>
            <span className={r.tone}>{r.status}</span>
          </div>
        ))}
      </div>
    </section>
  )
}

function AlarmPanel() {
  return (
    <section className="relative w-[518px] h-[437px]">
      <div className="absolute inset-0 bg-[#0e3a7c] [clip-path:polygon(0_0,461px_0,100%_73px,100%_100%,28px_100%,0_399px)]" />
      <div className="absolute inset-[3px] bg-[#0d1b3a] [clip-path:polygon(0_0,457px_0,100%_72px,100%_100%,26px_100%,0_397px)]" />
      <StepBracket className="absolute -top-[1px] right-0 w-[41px] h-[55px]" />
      <svg viewBox="0 0 518 450" className="absolute top-0 left-0 w-[518px] h-[450px] pointer-events-none">
        <polyline points="1,416 23,443 450,443" fill="none" stroke="#0a4ea5" strokeWidth="2.5" />
      </svg>
      <div className="relative pt-[33px]">
        <div className="flex justify-center items-center gap-[9px] h-[33px] mr-[19px] text-[27px] text-[#16d8ee]">
          <Hex stroke="#19c8d0" className="w-[40px] h-[33px] shrink-0">
            <circle cx="20" cy="17" r="2" fill="none" stroke="#c01a1a" strokeWidth="1.2" />
            <path d="M15 11C12 14 12 20 15 23M25 11C28 14 28 20 25 23" fill="none" stroke="#c01a1a" strokeWidth="3" />
            <circle cx="20" cy="17" r="4.5" fill="none" stroke="#a01a1a" strokeWidth="1.5" />
          </Hex>
          <span>报警记录</span>
        </div>
        <div className="mt-[27px] ml-[110px] w-[282px] h-px bg-[linear-gradient(90deg,transparent,#8b93a3,transparent)]" />
        <ul className="mt-[45px] ml-[86px] text-[21.6px] text-[#f5f516]">
          <li className="h-[32px] leading-[32px]">对河社区三无小区一猪头汤</li>
          <li className="mt-[20px] h-[32px] leading-[32px]">对河社区三无小区一猪头汤</li>
        </ul>
      </div>
    </section>
  )
}

function DataPanel() {
  const rows = [
    { a: '老街社区沿河东路一好邻居特色汤包店', h: 'h-[75px] -mt-[48px]' },
    { a: '老街社区沿河东路一好邻居特色汤包店', h: 'h-[76px]' },
    { a: '老街社区沿河东路一好邻居特色汤包店', h: 'h-[76px]' },
    { a: '老街社区沿河东路一飞雨餐饮店', h: 'h-[75px] border-b-white' },
  ]
  return (
    <section className="relative w-[518px] h-[553px] mt-[17px]">
      <div className="absolute inset-0 bg-[#0e3a7c] [clip-path:polygon(56px_0,100%_0,100%_506px,487px_100%,0_100%,0_88px)]" />
      <div className="absolute inset-[3px] bg-[#0d1b3a] [clip-path:polygon(54px_0,100%_0,100%_504px,485px_100%,0_100%,0_86px)]" />
      <StepBracket className="absolute -top-[3px] -left-[2px] w-[41px] h-[71px] -scale-x-100" />
      <svg viewBox="0 0 518 570" className="absolute top-0 left-0 w-[518px] h-[570px] pointer-events-none">
        <polyline points="67,562 492,562 514,527" fill="none" stroke="#0a4ea5" strokeWidth="2.5" />
      </svg>
      <div className="relative pt-[9px]">
        <div className="flex justify-center items-center gap-[11px] h-[33px] mr-[10px] text-[22px] text-white">
          <Hex stroke="#15bfae" className="w-[40px] h-[33px] shrink-0">
            <circle cx="20" cy="17" r="9" fill="none" stroke="#15bfae" strokeWidth="1.6" strokeDasharray="48 8" />
            <path d="M14 9L11 14L17 13M15 16L24 19" fill="none" stroke="#15bfae" strokeWidth="1.6" />
          </Hex>
          <span>数据记录(已处理)</span>
        </div>
        <div className="ml-[7px] mt-[15px] w-[514px] h-[32px] grid grid-cols-2 items-center text-center text-[22px] text-white">
          <span>警报</span>
          <span>处理人</span>
        </div>
        <div className="mt-[37px] ml-[38px] w-[455px] h-[349px] overflow-hidden text-[19px] text-[#d8e2f5]">
          {rows.map((r, i) => (
            <div key={i} className={`${r.h} pt-[3px] grid grid-cols-2 items-center text-center bg-[#132240] border-b-2 border-[#2b3954]`}>
              <span className="mx-auto w-[196px] leading-[31px]">{r.a}</span>
              <span>李四</span>
            </div>
          ))}
          <div className="h-[58px] bg-[#132240] border-b-2 border-[#2b3954] border-r-[3px] border-r-white" />
          <div className="h-[46px] grid grid-cols-2 items-center text-center bg-[#132240] border-r-[3px] border-r-white">
            <span>禹州S2—107</span>
            <span>李四</span>
          </div>
        </div>
      </div>
    </section>
  )
}

function Arrow({ d, className }: { d: string; className: string }) {
  return (
    <svg viewBox="0 0 10 10" preserveAspectRatio="none" className={className}>
      <polygon points={d} fill="#8f8f8f" />
    </svg>
  )
}

export default function App() {
  return (
    <div className="w-[2560px] h-[1440px] flex flex-col overflow-hidden bg-white font-['Liberation_Sans','Noto_Sans_CJK_SC',sans-serif]">
      <div className="flex flex-1 min-h-0">
        <main className="relative w-[2538px] bg-[#080e2c] bg-[linear-gradient(rgba(40,70,130,0.04)_1px,transparent_1px),linear-gradient(90deg,rgba(40,70,130,0.04)_1px,transparent_1px)] bg-[size:8px_8px]">
          <Header />
          <div className="flex items-start pl-[74px]">
            <div className="w-[543px] shrink-0">
              <DonutBlock />
              <PiePanel />
              <BarPanel />
            </div>
            <div className="w-[1208px] ml-[47px] shrink-0">
              <MapPanel />
              <UserTable />
            </div>
            <div className="w-[541px] ml-[28px] shrink-0">
              <div className="relative ml-[21px] w-[520px] h-[235px] flex items-start">
                <TopBracket />
                <TopBracket flip />
                <div className="ml-[43px] mt-[4px]">
                  <Gauge id="g1" from="#e60a2a" mid="#d4145a" to="#b514b5" title="报警信息(年)" value="401 条" textPad="pt-[47px]" />
                </div>
                <div className="ml-[155px] mt-[9px]">
                  <Gauge id="g2" from="#176de0" mid="#0ea5ff" to="#17a8ff" title="处理进度(年)" value="97.51 %" textPad="pt-[42px]" />
                </div>
              </div>
              <AlarmPanel />
              <DataPanel />
            </div>
          </div>
          <div className="absolute right-0 top-[861px] w-[7px] h-[432px] bg-white">
            <div className="absolute right-0 top-[39px] w-[2px] h-[333px] bg-[#8f8f8f]" />
          </div>
        </main>
        <div className="w-[22px] bg-white flex flex-col pl-[5px] pt-[13px]">
          <Arrow d="5,0 10,10 0,10" className="w-[13px] h-[10px]" />
          <div className="mt-[39px] w-[13px] h-[1319px] rounded-[6px] bg-[#8f8f8f]" />
          <Arrow d="0,0 10,0 5,10" className="mt-[14px] w-[13px] h-[10px]" />
        </div>
      </div>
      <div className="h-[23px] bg-white flex items-start pl-[12px] pt-[5px]">
        <Arrow d="10,0 10,10 0,5" className="w-[11px] h-[14px]" />
        <div className="ml-[12px] w-[2453px] h-[13px] rounded-[7px] bg-[#8f8f8f]" />
        <Arrow d="0,0 10,5 0,10" className="ml-[27px] w-[11px] h-[14px]" />
      </div>
    </div>
  )
}
